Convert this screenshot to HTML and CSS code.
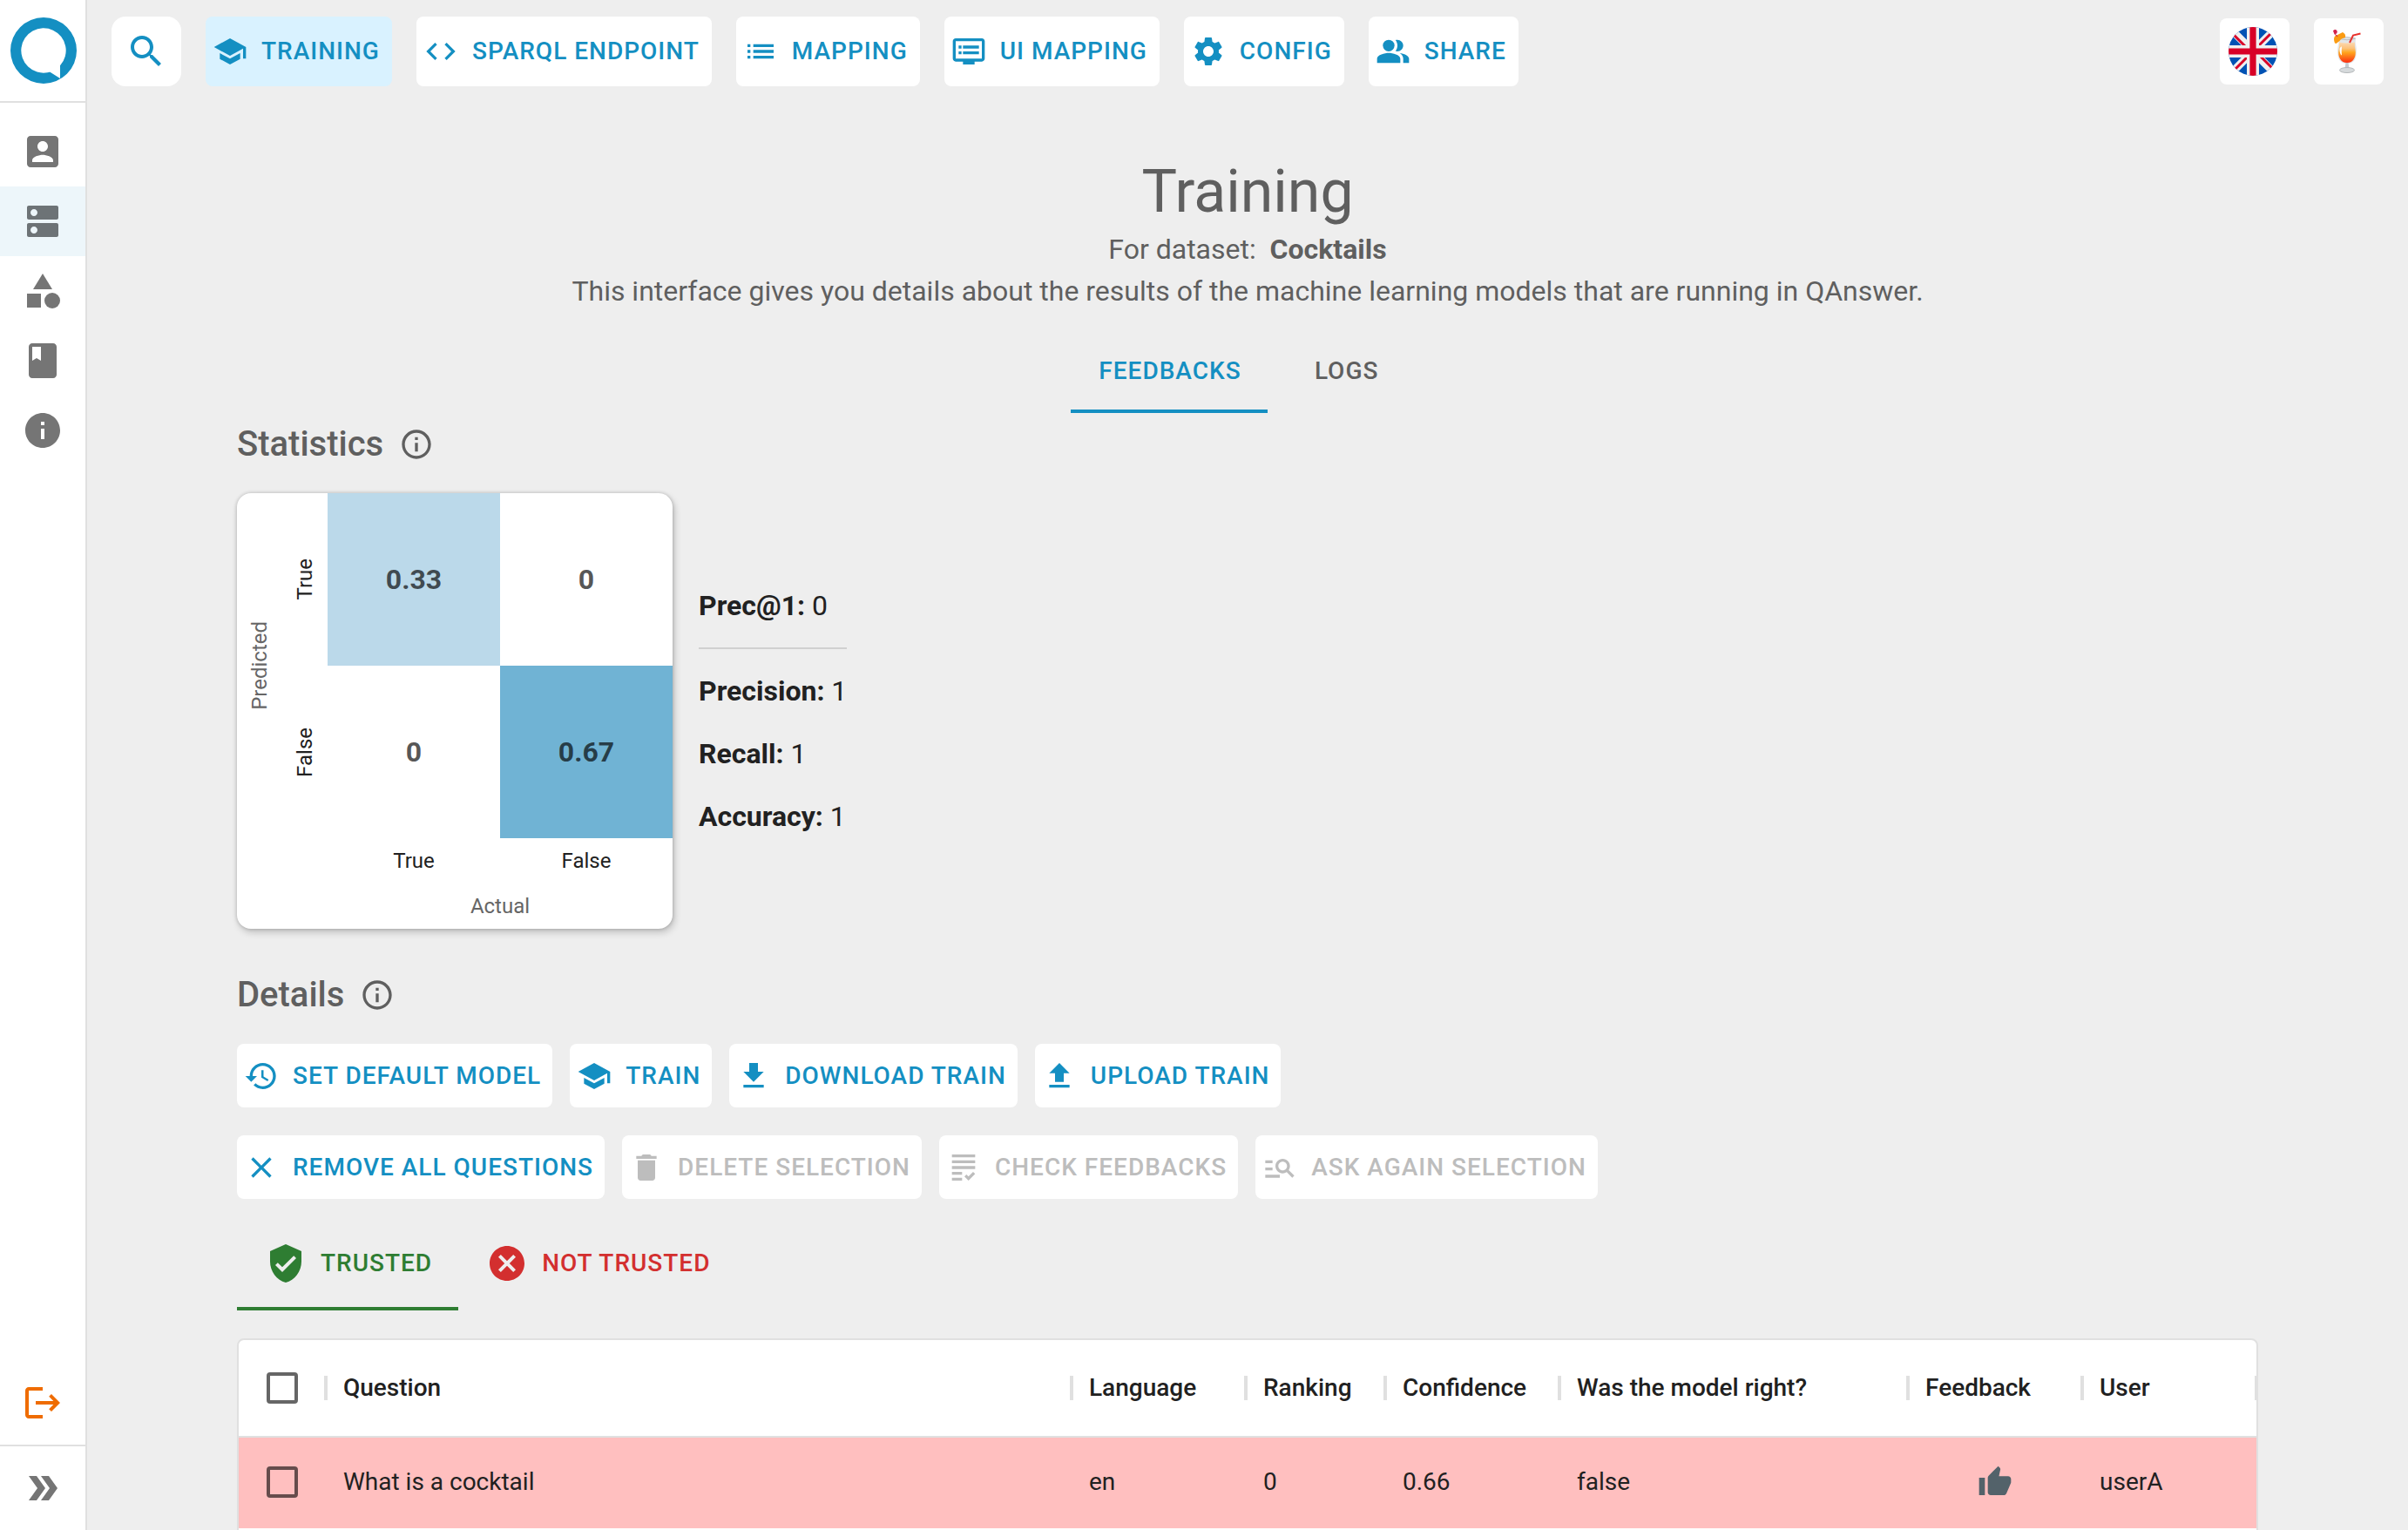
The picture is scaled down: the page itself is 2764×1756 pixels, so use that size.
FILE: index.html
```html
<!DOCTYPE html>
<html lang="en">
<head>
<meta charset="utf-8">
<title>QAnswer – Training</title>
<link rel="stylesheet" href="styles.css">
</head>
<body>
<div class="app">
  <aside class="sidebar">
    <a class="logo" href="#" aria-label="QAnswer">
      <svg viewBox="0 0 76 76" class="logo-mark"><path fill-rule="evenodd" d="M38 0a38 38 0 1 0 0 76a38 38 0 1 0 0-76zM57 55.300V70L45.500 62.800Q44 62.600 42.500 63.300A25.700 25.700 0 1 1 57 55.300z"/></svg>
    </a>
    <nav class="side-nav" aria-label="Sections">
      <a href="#" class="side-link" aria-label="Account"><svg class="icon icon-lg" viewBox="0 0 24 24"><path d="M3 5v14c0 1.100.890 2 2 2h14c1.100 0 2-.900 2-2V5c0-1.100-.900-2-2-2H5c-1.110 0-2 .900-2 2zm12 4c0 1.660-1.340 3-3 3s-3-1.340-3-3 1.340-3 3-3 3 1.340 3 3zm-9 8c0-2 4-3.100 6-3.100s6 1.100 6 3.100v1H6v-1z"/></svg></a>
      <a href="#" class="side-link is-active" aria-label="Datasets"><svg class="icon icon-lg" viewBox="0 0 24 24"><path d="M20 13H4c-.550 0-1 .450-1 1v6c0 .550.450 1 1 1h16c.550 0 1-.450 1-1v-6c0-.550-.450-1-1-1zM7 19c-1.100 0-2-.900-2-2s.900-2 2-2 2 .900 2 2-.900 2-2 2zM20 3H4c-.550 0-1 .450-1 1v6c0 .550.450 1 1 1h16c.550 0 1-.450 1-1V4c0-.550-.450-1-1-1zM7 9c-1.100 0-2-.900-2-2s.900-2 2-2 2 .900 2 2-.900 2-2 2z"/></svg></a>
      <a href="#" class="side-link" aria-label="Categories"><svg class="icon icon-lg" viewBox="0 0 24 24"><path d="M12 2l-5.500 9h11z"/><circle cx="17.500" cy="17.500" r="4.500"/><path d="M3 13.500h8v8H3z"/></svg></a>
      <a href="#" class="side-link" aria-label="Documentation"><svg class="icon icon-lg" viewBox="0 0 24 24"><path d="M18 2H6c-1.100 0-2 .900-2 2v16c0 1.100.900 2 2 2h12c1.100 0 2-.900 2-2V4c0-1.100-.900-2-2-2zM6 4h5v8l-2.500-1.500L6 12V4z"/></svg></a>
      <a href="#" class="side-link" aria-label="About"><svg class="icon icon-lg" viewBox="0 0 24 24"><path d="M12 2C6.480 2 2 6.480 2 12s4.480 10 10 10 10-4.480 10-10S17.520 2 12 2zm1 15h-2v-6h2v6zm0-8h-2V7h2v2z"/></svg></a>
    </nav>
    <div class="side-foot">
      <button type="button" class="side-link logout" aria-label="Log out"><svg class="icon icon-lg" viewBox="0 0 24 24"><path d="M17 7l-1.410 1.410L18.170 11H8v2h10.170l-2.580 2.580L17 17l5-5zM4 5h8V3H4c-1.100 0-2 .900-2 2v14c0 1.100.900 2 2 2h8v-2H4V5z"/></svg></button>
      <button type="button" class="side-link expand" aria-label="Expand menu"><svg class="icon icon-lg" viewBox="0 0 24 24"><path d="M15.500 5H11l5 7-5 7h4.500l5-7z"/><path d="M8.500 5H4l5 7-5 7h4.500l5-7z"/></svg></button>
    </div>
  </aside>

  <div class="main">
    <header class="topbar">
      <button type="button" class="icon-btn" aria-label="Search"><svg class="icon icon-lg" viewBox="0 0 24 24"><path d="M15.500 14h-.790l-.280-.270C15.410 12.590 16 11.110 16 9.500 16 5.910 13.090 3 9.500 3S3 5.910 3 9.500 5.910 16 9.500 16c1.610 0 3.090-.590 4.230-1.570l.270.280v.790l5 4.990L20.490 19l-4.990-5zm-6 0C7.010 14 5 11.990 5 9.500S7.010 5 9.500 5 14 7.010 14 9.500 11.990 14 9.500 14z"/></svg></button>
      <nav class="top-nav" aria-label="Dataset">
        <a href="#" class="btn btn-tall is-active"><svg class="icon" viewBox="0 0 24 24"><path d="M5 13.180v4L12 21l7-3.820v-4L12 17l-7-3.820zM12 3L1 9l11 6 9-4.910V17h2V9L12 3z"/></svg>TRAINING</a>
        <a href="#" class="btn btn-tall"><svg class="icon" viewBox="0 0 24 24"><path d="M9.400 16.600L4.800 12l4.600-4.600L8 6l-6 6 6 6 1.400-1.400zm5.200 0l4.600-4.600-4.600-4.600L16 6l6 6-6 6-1.400-1.400z"/></svg>SPARQL ENDPOINT</a>
        <a href="#" class="btn btn-tall"><svg class="icon" viewBox="0 0 24 24"><path d="M3 13h2v-2H3v2zm0 4h2v-2H3v2zm0-8h2V7H3v2zm4 4h14v-2H7v2zm0 4h14v-2H7v2zM7 7v2h14V7H7z"/></svg>MAPPING</a>
        <a href="#" class="btn btn-tall"><svg class="icon" viewBox="0 0 24 24"><path d="M21 3H3c-1.100 0-2 .900-2 2v12c0 1.100.900 2 2 2h5v2h8v-2h5c1.100 0 1.990-.900 1.990-2L23 5c0-1.100-.900-2-2-2zm0 14H3V5h18v12zm-2-9H8v2h11V8zm0 4H8v2h11v-2zM7 8H5v2h2V8zm0 4H5v2h2v-2z"/></svg>UI MAPPING</a>
        <a href="#" class="btn btn-tall"><svg class="icon" viewBox="0 0 24 24"><path d="M19.140 12.940c.040-.300.060-.610.060-.940 0-.320-.020-.640-.070-.940l2.030-1.580c.180-.140.230-.410.120-.610l-1.920-3.320c-.120-.220-.370-.290-.590-.220l-2.390.960c-.500-.380-1.030-.700-1.620-.940l-.360-2.540c-.040-.240-.240-.410-.480-.410h-3.840c-.240 0-.430.170-.470.410l-.360 2.540c-.590.240-1.130.570-1.620.940l-2.390-.960c-.220-.080-.470 0-.590.220L2.740 8.870c-.120.210-.080.470.120.610l2.030 1.580c-.050.300-.090.630-.090.940s.020.640.070.940l-2.030 1.580c-.180.140-.230.410-.120.610l1.920 3.320c.120.220.370.290.590.220l2.390-.960c.500.380 1.030.700 1.620.940l.360 2.540c.050.240.240.410.480.410h3.840c.240 0 .440-.170.470-.410l.360-2.540c.590-.240 1.130-.560 1.620-.940l2.390.960c.220.080.470 0 .590-.220l1.920-3.320c.120-.220.070-.470-.120-.610l-2.010-1.580zM12 15.600c-1.980 0-3.600-1.620-3.600-3.600s1.620-3.600 3.600-3.600 3.600 1.620 3.600 3.600-1.620 3.600-3.600 3.600z"/></svg>CONFIG</a>
        <a href="#" class="btn btn-tall"><svg class="icon" viewBox="0 0 24 24"><path d="M16.670 13.130C18.040 14.060 19 15.320 19 17v3h4v-3c0-2.180-3.570-3.470-6.330-3.870z"/><circle cx="9" cy="8" r="4"/><path d="M15 12c2.210 0 4-1.790 4-4s-1.790-4-4-4c-.470 0-.910.100-1.330.240C14.500 5.270 15 6.580 15 8s-.500 2.730-1.330 3.760c.420.140.860.240 1.330.240zM9 13c-2.670 0-8 1.340-8 4v3h16v-3c0-2.660-5.330-4-8-4z"/></svg>SHARE</a>
      </nav>
      <div class="top-tools">
        <button type="button" class="tool-btn" aria-label="Language: English">
          <svg class="tool-pic" viewBox="0 0 56 56"><defs><clipPath id="disc"><circle cx="28" cy="28" r="28"/></clipPath></defs><g clip-path="url(#disc)"><path fill="#0052b4" d="M0 0h56v56H0z"/><path stroke="#f0f0f0" stroke-width="9" d="M0 0l56 56M56 0L0 56"/><path stroke="#d80027" stroke-width="3" d="M6 9l16 16M34 22L50 6M22 34L6 50M34 31l16 16"/><path fill="#f0f0f0" d="M21 0h14v56H21zM0 21h56v14H0z"/><path fill="#d80027" d="M24.400 0h7.200v56h-7.200zM0 24.400h56v7.200H0z"/></g></svg>
        </button>
        <button type="button" class="tool-btn" aria-label="Dataset: Cocktails">
          <svg class="tool-pic" viewBox="0 0 56 56"><defs><linearGradient id="juice" x1="0" y1="0" x2="0" y2="1"><stop offset="0" stop-color="#fbd9b4"/><stop offset=".300" stop-color="#fcc27a"/><stop offset=".500" stop-color="#ffa51e"/><stop offset="1" stop-color="#fb2d12"/></linearGradient></defs><path fill="#e3e6e8" d="M18.500 12.500q9.500-2 19.500 0q-1 6 .500 10q1.500 8-1.500 15q-3 4.500-9 4.500t-9-4.500q-3-7-1.500-15q1.500-4 1-10z"/><path fill="url(#juice)" d="M19 17.500q9 2 18 0q-.500 4 .500 8q1 7-1.500 11q-2.500 4.500-8 4.500t-8-4.500q-2.500-4-1.500-11q1-4 .500-8z"/><path fill="#fff" d="M19.500 25q1-3 2.500-2.500q-.500 5 0 10q-2.500-1-2.500-7.500z"/><path fill="none" stroke="#b9bdc0" d="M18.500 13.500q9.500 2.500 19 0M18.500 13q9-2.500 19 0"/><path fill="none" stroke="#e8322d" stroke-width="2" d="M31 18l4-8.500l8.500-2"/><path fill="#fa9b13" d="M14 18.500q-2-5 0-8l9-4.500q4 2 3 6q-5 1-6.500 4l-4 3z"/><path fill="#d2214b" d="M12 4.500a2.500 2.500 0 1 1 2.500 3.500l3 2.500-.700.700-3.300-3z"/><path fill="#c5cace" d="M26.500 41h3l1 7h-5z"/><ellipse cx="28" cy="49.500" rx="8.500" ry="3" fill="#d6dadc" stroke="#b4b8ba"/></svg>
        </button>
      </div>
    </header>

    <main class="content">
      <div class="intro">
        <h1 class="title">Training</h1>
        <p class="lead">For dataset:&nbsp; <strong>Cocktails</strong></p>
        <p class="lead">This interface gives you details about the results of the machine learning models that are running in QAnswer.</p>
      </div>

      <div class="tabs tabs-center" role="tablist">
        <button type="button" role="tab" aria-selected="true" class="tab is-selected">FEEDBACKS</button>
        <button type="button" role="tab" aria-selected="false" class="tab">LOGS</button>
      </div>

      <section class="stats">
        <h2 class="heading">Statistics <svg class="icon" viewBox="0 0 24 24"><path d="M11 7h2v2h-2zm0 4h2v6h-2zm1-9C6.480 2 2 6.480 2 12s4.480 10 10 10 10-4.480 10-10S17.520 2 12 2zm0 18c-4.410 0-8-3.590-8-8s3.590-8 8-8 8 3.590 8 8-3.590 8-8 8z"/></svg></h2>
        <div class="stats-row">
          <div class="matrix">
            <div class="axis axis-y">Predicted</div>
            <div class="tick tick-y">True</div>
            <div class="cell cell-low">0.33</div>
            <div class="cell">0</div>
            <div class="tick tick-y">False</div>
            <div class="cell">0</div>
            <div class="cell cell-high">0.67</div>
            <div class="tick tick-first">True</div>
            <div class="tick">False</div>
            <div class="axis axis-x">Actual</div>
          </div>
          <div class="metrics">
            <p><strong>Prec@1:</strong> 0</p>
            <hr>
            <p><strong>Precision:</strong> 1</p>
            <p><strong>Recall:</strong> 1</p>
            <p><strong>Accuracy:</strong> 1</p>
          </div>
        </div>
      </section>

      <section class="details">
        <h2 class="heading">Details <svg class="icon" viewBox="0 0 24 24"><path d="M11 7h2v2h-2zm0 4h2v6h-2zm1-9C6.480 2 2 6.480 2 12s4.480 10 10 10 10-4.480 10-10S17.520 2 12 2zm0 18c-4.410 0-8-3.590-8-8s3.590-8 8-8 8 3.590 8 8-3.590 8-8 8z"/></svg></h2>
        <div class="actions">
          <div class="action-row">
            <button type="button" class="btn"><svg class="icon" viewBox="0 0 24 24"><path d="M13 3c-4.970 0-9 4.030-9 9H1l3.890 3.890.070.140L9 12H6c0-3.870 3.130-7 7-7s7 3.130 7 7-3.130 7-7 7c-1.930 0-3.680-.790-4.940-2.060l-1.420 1.420C8.270 19.990 10.510 21 13 21c4.970 0 9-4.030 9-9s-4.030-9-9-9zm-1 5v5l4.280 2.540.720-1.210-3.500-2.080V8H12z"/></svg>SET DEFAULT MODEL</button>
            <button type="button" class="btn"><svg class="icon" viewBox="0 0 24 24"><path d="M5 13.180v4L12 21l7-3.820v-4L12 17l-7-3.820zM12 3L1 9l11 6 9-4.910V17h2V9L12 3z"/></svg>TRAIN</button>
            <button type="button" class="btn"><svg class="icon" viewBox="0 0 24 24"><path d="M19 9h-4V3H9v6H5l7 7 7-7zM5 18v2h14v-2H5z"/></svg>DOWNLOAD TRAIN</button>
            <button type="button" class="btn"><svg class="icon" viewBox="0 0 24 24"><path d="M9 16h6v-6h4l-7-7-7 7h4zm-4 2h14v2H5z"/></svg>UPLOAD TRAIN</button>
          </div>
          <div class="action-row">
            <button type="button" class="btn"><svg class="icon" viewBox="0 0 24 24"><path d="M19 6.410L17.590 5 12 10.590 6.410 5 5 6.410 10.590 12 5 17.590 6.410 19 12 13.410 17.590 19 19 17.590 13.410 12z"/></svg>REMOVE ALL QUESTIONS</button>
            <button type="button" class="btn" disabled><svg class="icon" viewBox="0 0 24 24"><path d="M6 19c0 1.100.900 2 2 2h8c1.100 0 2-.900 2-2V7H6v12zM19 4h-3.500l-1-1h-5l-1 1H5v2h14V4z"/></svg>DELETE SELECTION</button>
            <button type="button" class="btn" disabled><svg class="icon" viewBox="0 0 24 24"><path d="M4 7h16v2H4V7zm0 6h16v-2H4v2zm0 4h7v-2H4v2zm0 4h7v-2H4v2zm11.410-2.830L14 16.750l-1.410 1.410L15.410 21 20 16.420 18.580 15l-3.170 3.170zM4 3v2h16V3H4z"/></svg>CHECK FEEDBACKS</button>
            <button type="button" class="btn" disabled><svg class="icon" viewBox="0 0 24 24"><path d="M7 9H2V7h5v2zm0 3H2v2h5v-2zm13.590 7l-3.830-3.830c-.800.520-1.740.830-2.760.830-2.760 0-5-2.240-5-5s2.240-5 5-5 5 2.240 5 5c0 1.020-.310 1.960-.830 2.750L22 17.590 20.590 19zM17 11c0-1.650-1.350-3-3-3s-3 1.350-3 3 1.350 3 3 3 3-1.350 3-3zM2 19h10v-2H2v2z"/></svg>ASK AGAIN SELECTION</button>
          </div>
        </div>

        <div class="tabs tabs-trust" role="tablist">
          <button type="button" role="tab" aria-selected="true" class="tab tab-trusted is-selected"><svg class="icon icon-lg" viewBox="0 0 24 24"><path d="M12 1L3 5v6c0 5.550 3.840 10.740 9 12 5.160-1.260 9-6.450 9-12V5l-9-4zm-2 16l-4-4 1.410-1.410L10 14.170l6.590-6.590L18 9l-8 8z"/></svg>TRUSTED</button>
          <button type="button" role="tab" aria-selected="false" class="tab tab-untrusted"><svg class="icon icon-lg" viewBox="0 0 24 24"><path d="M12 2C6.470 2 2 6.470 2 12s4.470 10 10 10 10-4.470 10-10S17.530 2 12 2zm5 13.590L15.590 17 12 13.410 8.410 17 7 15.590 10.590 12 7 8.410 8.410 7 12 10.590 15.590 7 17 8.410 13.410 12 17 15.590z"/></svg>NOT TRUSTED</button>
        </div>

        <div class="grid">
          <table class="grid-table">
            <colgroup><col class="w-check"><col><col class="w-200"><col class="w-160"><col class="w-200"><col class="w-400"><col class="w-200"><col class="w-200"></colgroup>
            <thead>
              <tr>
                <th class="check-cell"><input type="checkbox" class="check" aria-label="Select all rows"></th>
                <th>Question</th>
                <th>Language</th>
                <th>Ranking</th>
                <th>Confidence</th>
                <th>Was the model right?</th>
                <th>Feedback</th>
                <th>User</th>
              </tr>
            </thead>
            <tbody>
              <tr class="row-wrong">
                <td class="check-cell"><input type="checkbox" class="check" aria-label="Select row"></td>
                <td>What is a cocktail</td>
                <td>en</td>
                <td>0</td>
                <td>0.66</td>
                <td>false</td>
                <td class="thumb-cell"><svg class="icon thumb" viewBox="0 0 24 24"><path d="M1 21h4V9H1v12zm22-11c0-1.100-.900-2-2-2h-6.310l.950-4.570.030-.320c0-.410-.170-.790-.440-1.060L14.170 1 7.590 7.590C7.220 7.950 7 8.450 7 9v10c0 1.100.900 2 2 2h9c.830 0 1.540-.500 1.840-1.220l3.020-7.050c.090-.230.140-.470.140-.730v-2z"/></svg></td>
                <td>userA</td>
              </tr>
            </tbody>
          </table>
        </div>
      </section>
    </main>
  </div>
</div>
</body>
</html>
```
FILE: styles.css
```css
:root {
  --primary: #148fc2;
  --line: #e0e0e0;
  --muted: #5f5f5f;
  --text: #212121;
}

* { box-sizing: border-box; }

body {
  margin: 0;
  background: #eee;
  color: var(--text);
  font: 400 32px/48px Roboto, "Liberation Sans", sans-serif;
}

h1, h2, p { margin: 0; }

button {
  border: 0;
  background: none;
  font: inherit;
  cursor: pointer;
}

a { text-decoration: none; }

.app {
  display: flex;
  height: 100vh;
  overflow: hidden;
}

.icon {
  flex: none;
  width: 40px;
  height: 40px;
  fill: currentColor;
}

.icon-lg {
  width: 48px;
  height: 48px;
}

/* Sidebar */
.sidebar {
  flex: none;
  display: flex;
  flex-direction: column;
  width: 100px;
  border-right: 2px solid var(--line);
  background: #fff;
}

.logo {
  display: flex;
  align-items: center;
  height: 118px;
  padding-left: 12px;
  border-bottom: 2px solid var(--line);
}

.logo-mark {
  width: 76px;
  height: 76px;
  fill: var(--primary);
}

.side-nav { padding: 16px 0; }

.side-link {
  display: flex;
  align-items: center;
  justify-content: center;
  width: 100%;
  height: 80px;
  padding: 0;
  color: #757575;
}

.side-link.is-active {
  background: #edf6fa;
  color: #6d7376;
}

.side-foot { margin-top: auto; }

.logout {
  height: 98px;
  border-bottom: 2px solid var(--line);
  color: #ef6c00;
}

.expand { height: 96px; }

/* Top bar */
.main {
  flex: 1;
  min-width: 0;
  overflow-y: auto;
  scrollbar-width: none;
}

.topbar {
  display: flex;
  align-items: center;
  gap: 28px;
  height: 118px;
  padding: 0 28px;
}

.top-nav,
.top-tools {
  display: flex;
  gap: 28px;
}

.top-tools { margin-left: auto; }

.icon-btn {
  display: flex;
  padding: 16px;
  border-radius: 16px;
  background: #fff;
  color: var(--primary);
}

.tool-btn {
  display: flex;
  padding: 10px 14px 10px 10px;
  border-radius: 8px;
  background: #fff;
}

.tool-pic {
  width: 56px;
  height: 56px;
}

.btn {
  display: flex;
  align-items: center;
  gap: 16px;
  padding: 12px 13px 12px 8px;
  border-radius: 8px;
  background: #fff;
  color: var(--primary);
  font-size: 28px;
  font-weight: 500;
  line-height: 49px;
  letter-spacing: 1px;
  white-space: nowrap;
}

.btn-tall {
  padding-right: 14px;
  line-height: 56px;
}

.btn.is-active { background: #d9f2ff; }

.btn:disabled { color: #bdbdbd; }

/* Page */
.content { padding: 60px 172px; }

.intro {
  color: var(--muted);
  text-align: center;
}

.title {
  font-size: 68px;
  font-weight: 400;
  line-height: 84px;
}

.tabs {
  display: flex;
  color: var(--muted);
}

.tabs-center {
  justify-content: center;
  margin-top: 20px;
}

.tab {
  display: flex;
  align-items: center;
  justify-content: center;
  gap: 16px;
  min-width: 180px;
  height: 96px;
  padding: 0 30px 0 32px;
  color: inherit;
  font-size: 28px;
  font-weight: 500;
  letter-spacing: 1px;
}

.tab.is-selected {
  color: var(--primary);
  box-shadow: inset 0 -4px currentColor;
}

.tabs-trust { margin-top: 20px; }

.tabs-trust .tab { height: 108px; }

.tabs-trust .tab-trusted { color: #2e7d32; }

.tabs-trust .tab-untrusted { color: #d32f2f; }

.heading {
  display: flex;
  align-items: center;
  gap: 18px;
  color: var(--muted);
  font-size: 40px;
  font-weight: 500;
  line-height: 64px;
}

/* Statistics */
.stats { margin-top: 4px; }

.stats-row {
  display: flex;
  align-items: center;
  gap: 30px;
  margin-top: 24px;
}

.matrix {
  display: grid;
  grid-template: 198px 198px 52px 52px / 52px 52px 198px 198px;
  place-items: center;
  overflow: hidden;
  border-radius: 16px;
  background: #fff;
  box-shadow: 2px 4px 8px rgba(0, 0, 0, .2), 0 0 4px rgba(0, 0, 0, .2);
  font-size: 24px;
  line-height: 32px;
}

.axis { color: #666; }

.axis-y { grid-row: 1 / 3; }

.axis-x { grid-column: 3 / 5; }

.axis-y,
.tick-y {
  writing-mode: vertical-rl;
  transform: rotate(180deg);
}

.tick-first { grid-column: 3; }

.cell {
  display: flex;
  align-items: center;
  justify-content: center;
  width: 100%;
  height: 100%;
  color: rgba(0, 0, 0, .67);
  font-size: 32px;
  font-weight: 700;
}

.cell-low { background: #bbd9ea; }

.cell-high { background: #70b3d4; }

.metrics {
  display: flex;
  flex-direction: column;
  gap: 24px;
}

.metrics hr {
  width: 100%;
  height: 2px;
  margin: 0;
  border: 0;
  background: #d0d0d0;
}

/* Details */
.details { margin-top: 44px; }

.actions {
  display: flex;
  flex-direction: column;
  gap: 32px;
  margin-top: 24px;
}

.action-row {
  display: flex;
  gap: 20px;
}

.grid {
  margin-top: 32px;
  padding-bottom: 104px;
  overflow: hidden;
  border: 2px solid var(--line);
  border-radius: 8px;
  background: #fff;
}

.grid-table {
  width: 100%;
  border-collapse: separate;
  border-spacing: 0;
  table-layout: fixed;
  font-size: 28px;
  line-height: 40px;
}

.w-check { width: 100px; }
.w-160 { width: 160px; }
.w-200 { width: 200px; }
.w-400 { width: 400px; }

.grid-table th {
  position: relative;
  height: 112px;
  padding: 0 20px;
  border-bottom: 2px solid var(--line);
  font-weight: 500;
  text-align: left;
}

/* Column resize handle between two headers */
.grid-table th::after {
  content: "";
  position: absolute;
  top: 41px;
  right: -2px;
  width: 4px;
  height: 28px;
  background: var(--line);
}

.grid-table td {
  height: 104px;
  padding: 0 20px;
  border-bottom: 2px solid transparent;
}

.grid-table .check-cell { padding: 0 32px; }

.row-wrong { background: #ffbfbf; }

.check {
  display: block;
  width: 36px;
  height: 36px;
  margin: 0;
  border: 4px solid rgba(0, 0, 0, .6);
  border-radius: 4px;
  appearance: none;
}

.thumb {
  display: block;
  margin: 0 auto;
  color: #53626a;
}
```
